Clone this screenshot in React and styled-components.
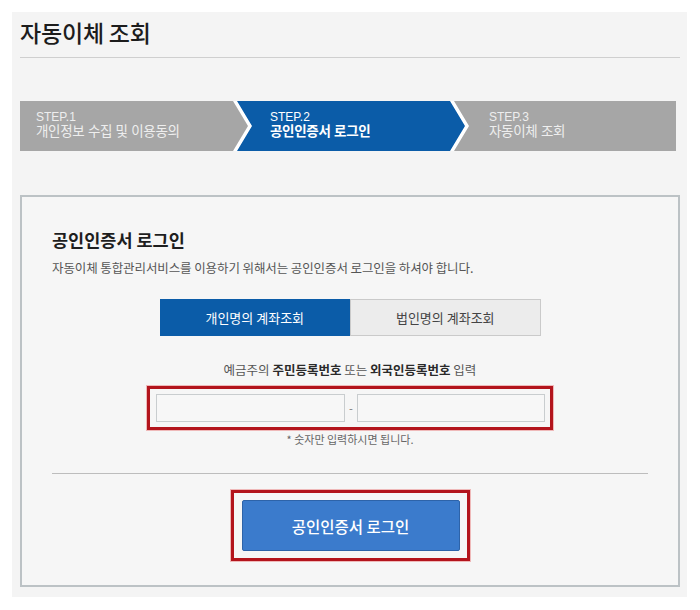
import React from "react";
import styled, { createGlobalStyle } from "styled-components";

const Global = createGlobalStyle`
  html, body { margin: 0; padding: 0; background: #ffffff; }
  body { font-family: "Noto Sans CJK KR", "Noto Sans", sans-serif; color: #222; }
  * { box-sizing: border-box; }
`;

const Page = styled.div`
  margin: 12px 13px 13px 12px;
  width: 675px;
  background: #f4f4f4;
  padding: 0 7px 10px 8px;
`;

const Header = styled.div`
  height: 46px;
  border-bottom: 1px solid #cfcfcf;
  display: flex;
  align-items: flex-start;
`;

const Title = styled.h1`
  margin: 0;
  font-size: 23px;
  line-height: 40px;
  font-weight: 500;
  color: #1c1c1c;
  letter-spacing: -0.2px;
`;

const StepBar = styled.div`
  margin-top: 43px;
  width: 656px;
  height: 50px;
  background: #ffffff;
  display: flex;
`;

const first = "polygon(0 0, 213px 0, 228px 25px, 213px 50px, 0 50px)";
const middle = "polygon(0 0, 213px 0, 228px 25px, 213px 50px, 0 50px, 15px 25px)";
const last = "polygon(0 0, 100% 0, 100% 50px, 0 50px, 15px 25px)";

const Step = styled.div`
  flex: 0 0 ${(p) => p.$w}px;
  margin-left: ${(p) => p.$ml}px;
  height: 50px;
  background: ${(p) => (p.$active ? "#0b5ca8" : "#a6a6a6")};
  clip-path: ${(p) => p.$clip};
  padding-left: ${(p) => p.$pl}px;
  padding-bottom: 4px;
  display: flex;
  flex-direction: column;
  justify-content: center;
  font-family: "Liberation Sans", "Noto Sans CJK KR", sans-serif;
  color: ${(p) => (p.$active ? "#ffffff" : "#eeeeee")};
`;

const StepNo = styled.span`
  font-size: 12px;
  line-height: 14px;
  font-weight: 400;
`;

const StepName = styled.span`
  font-size: 13.5px;
  line-height: 15px;
  font-weight: ${(p) => (p.$active ? 700 : 400)};
  letter-spacing: -0.3px;
`;

const Card = styled.div`
  margin-top: 44px;
  width: 660px;
  background: #f6f6f6;
  border: 2px solid #bcc2c5;
  padding: 30px 30px 24px 30px;
  display: flex;
  flex-direction: column;
`;

const CardTitle = styled.h2`
  margin: 0;
  font-size: 17.5px;
  line-height: 26px;
  font-weight: 700;
  color: #1e1e1e;
`;

const Desc = styled.p`
  margin: 6px 0 0;
  font-size: 12.5px;
  line-height: 18px;
  color: #555;
  letter-spacing: -0.1px;
`;

const Tabs = styled.div`
  margin: 22px auto 0;
  width: 381px;
  height: 37px;
  display: flex;
`;

const Tab = styled.button`
  flex: 1;
  height: 100%;
  margin: 0;
  padding: 0;
  font-family: inherit;
  font-size: 13px;
  cursor: pointer;
  border: 1px solid ${(p) => (p.$active ? "#0b5ca8" : "#cacaca")};
  background: ${(p) => (p.$active ? "#0b5ca8" : "#ececec")};
  color: ${(p) => (p.$active ? "#ffffff" : "#444")};
`;

const Label = styled.p`
  margin: 25px 0 0;
  text-align: center;
  font-size: 12.5px;
  line-height: 18px;
  color: #555;
  b { color: #2a2a2a; font-weight: 700; }
`;

const Highlight = styled.div`
  align-self: center;
  margin-top: ${(p) => p.$mt}px;
  border: 3px solid #b3141c;
  box-shadow: 0 0 0 1px rgba(230, 110, 110, 0.45);
  padding: ${(p) => p.$pad};
  display: flex;
  align-items: center;
`;

const Input = styled.input`
  width: ${(p) => p.$w}px;
  height: 28px;
  border: 1px solid #c9cdcf;
  background: #f7f7f7;
  font-family: inherit;
  outline: none;
`;

const Dash = styled.span`
  width: 12px;
  text-align: center;
  font-size: 11px;
  color: #777;
`;

const Note = styled.p`
  margin: 1px 0 0;
  text-align: center;
  font-size: 11px;
  line-height: 16px;
  color: #666;
`;

const Divider = styled.hr`
  margin: 26px 0 0;
  border: 0;
  border-top: 1px solid #bdbdbd;
  height: 0;
`;

const LoginButton = styled.button`
  width: 218px;
  height: 51px;
  margin: 0;
  background: #3b7bcc;
  border: 1px solid #2d63a9;
  border-radius: 2px;
  color: #ffffff;
  font-family: inherit;
  font-size: 15.5px;
  font-weight: 500;
  cursor: pointer;
`;

export default function App() {
  return (
    <>
      <Global />
      <Page>
        <Header>
          <Title>자동이체 조회</Title>
        </Header>
        <StepBar>
          <Step $w={228} $ml={0} $clip={first} $pl={16}>
            <StepNo>STEP.1</StepNo>
            <StepName>개인정보 수집 및 이용동의</StepName>
          </Step>
          <Step $w={228} $ml={-11} $clip={middle} $pl={33} $active>
            <StepNo>STEP.2</StepNo>
            <StepName $active>공인인증서 로그인</StepName>
          </Step>
          <Step $w={222} $ml={-11} $clip={last} $pl={35}>
            <StepNo>STEP.3</StepNo>
            <StepName>자동이체 조회</StepName>
          </Step>
        </StepBar>
        <Card>
          <CardTitle>공인인증서 로그인</CardTitle>
          <Desc>자동이체 통합관리서비스를 이용하기 위해서는 공인인증서 로그인을 하셔야 합니다.</Desc>
          <Tabs>
            <Tab $active>개인명의 계좌조회</Tab>
            <Tab>법인명의 계좌조회</Tab>
          </Tabs>
          <Label>
            예금주의 <b>주민등록번호</b> 또는 <b>외국인등록번호</b> 입력
          </Label>
          <Highlight $mt={7} $pad="5px 5px 5px 6px">
            <Input $w={189} />
            <Dash>-</Dash>
            <Input $w={188} />
          </Highlight>
          <Note>* 숫자만 입력하시면 됩니다.</Note>
          <Divider />
          <Highlight $mt={16} $pad="7px 7px 7px 8px">
            <LoginButton>공인인증서 로그인</LoginButton>
          </Highlight>
        </Card>
      </Page>
    </>
  );
}
